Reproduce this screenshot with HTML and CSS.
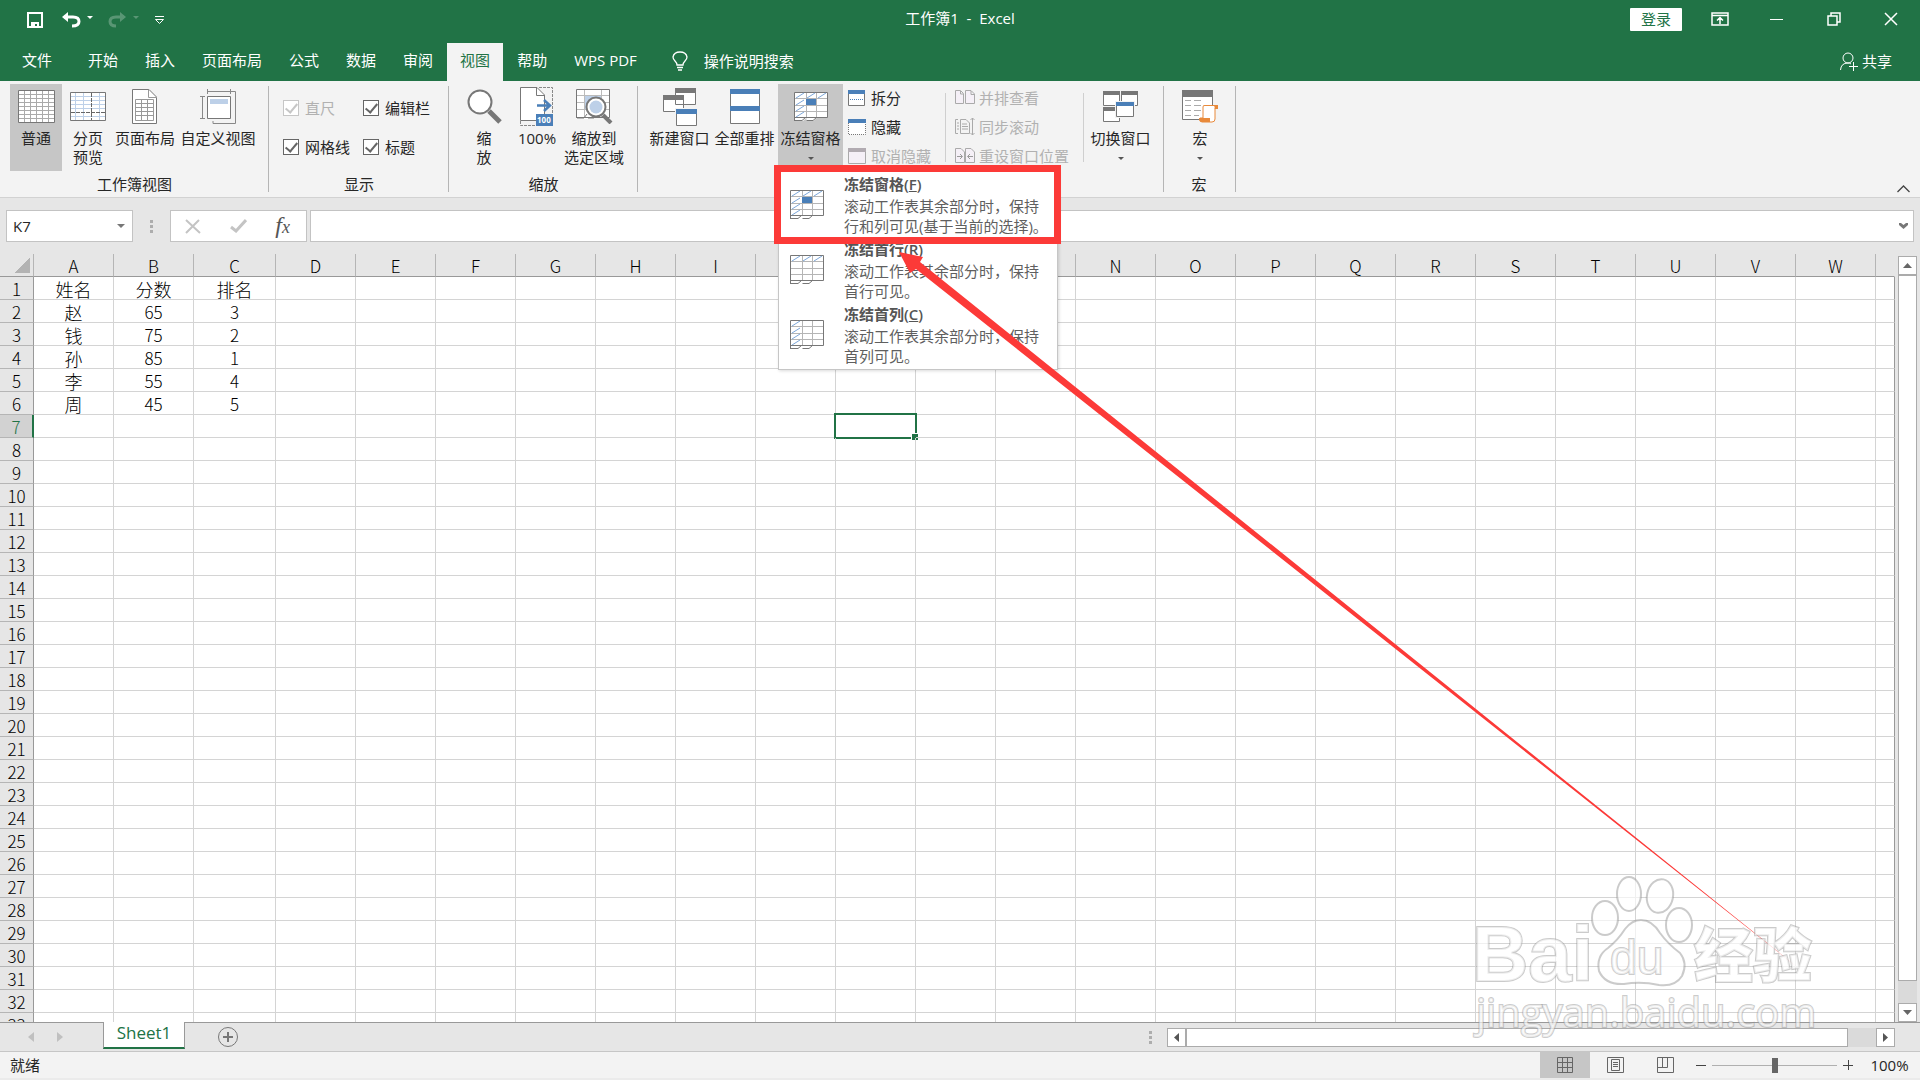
FILE: index.html
```html
<!DOCTYPE html>
<html lang="zh-CN">
<head>
<meta charset="utf-8">
<meta name="viewport" content="width=device-width, initial-scale=1">
<title>工作簿1 - Excel</title>
<link rel="stylesheet" href="styles.css">
</head>
<body>
<svg class="defs" aria-hidden="true">
  <symbol id="freeze-base" viewBox="0 0 34 30">
    <path d="M.5.5H33.500V25.500H23L19.500 29H12.500V25.500L9 29H.5Z" fill="#fff"/>
    <path d="M12.500 1V26M22.500 1V25M1 6.500H33M1 13.500H33M1 19.500H33" stroke="#b5b5b5" fill="none"/>
    <path d="M.5 29V.5H33.500V25.500H1M1 28.500H8L11.500 25.500M12.500 28.500H19L22.500 25.500" stroke="#777" fill="none"/>
  </symbol>
  <symbol id="freeze-panes" viewBox="0 0 34 30">
    <use href="#freeze-base" width="34" height="30"/>
    <path d="M2 6L10 1M13 6L21 1M24 6L32 1M2 13L10 8M2 19L10 14M2 25L10 20" stroke="#7da7d9" fill="none"/>
    <path d="M12 7H22V13H12Z" fill="#4a7fb8"/>
  </symbol>
  <symbol id="freeze-row" viewBox="0 0 34 30">
    <use href="#freeze-base" width="34" height="30"/>
    <path d="M2 6L10 1M13 6L21 1M24 6L32 1" stroke="#7da7d9" fill="none"/>
  </symbol>
  <symbol id="freeze-col" viewBox="0 0 34 30">
    <use href="#freeze-base" width="34" height="30"/>
    <path d="M2 6L10 1M2 13L10 8M2 19L10 14M2 25L10 20" stroke="#7da7d9" fill="none"/>
  </symbol>
</svg>

<div class="app">
  <header class="titlebar">
    <div class="quick">
      <button aria-label="保存"><svg width="16" height="16"><path d="M1 1H15V15H1Z" fill="none" stroke="#fff" stroke-width="2"/><path d="M4 10H12V16H10V12H8V16H4Z" fill="#fff"/></svg></button>
      <button class="undo" aria-label="撤销"><svg width="32" height="16"><path d="M2 5H11Q17 5 17 9.500T10 14" fill="none" stroke="#fff" stroke-width="3"/><path d="M0 5L6 0V10Z" fill="#fff"/><path d="M25 4H31L28 7Z" fill="#fff"/></svg></button>
      <button class="redo" aria-label="恢复"><svg width="32" height="16" opacity=".25"><path d="M16 5H8Q2 5 2 9.500T8 14" fill="none" stroke="#fff" stroke-width="3"/><path d="M18 5L12 0V10Z" fill="#fff"/><path d="M25 4H31L28 7Z" fill="#fff"/></svg></button>
      <button class="more" aria-label="自定义快速访问工具栏"><svg width="11" height="8"><path d="M1 .5H10M1.500 3.500H9.500L5.500 7.500Z" fill="none" stroke="#fff"/></svg></button>
    </div>
    <h1 class="title">工作簿1&nbsp; -&nbsp; Excel</h1>
    <div class="window-tools">
      <button class="login">登录</button>
      <button class="win" aria-label="功能区显示选项"><svg width="18" height="14"><path d="M1 1H17V13H1ZM1 3.500H17M9 12V6M6 8.500L9 5.500L12 8.500" fill="none" stroke="#fff" stroke-width="1.500"/></svg></button>
      <button class="win" aria-label="最小化"><svg width="14" height="14"><path d="M0 7.500H13" stroke="#fff"/></svg></button>
      <button class="win" aria-label="还原"><svg width="14" height="14"><path d="M1 4H10V13H1ZM4 4V1H13V10H10" fill="none" stroke="#fff" stroke-width="1.500"/></svg></button>
      <button class="win" aria-label="关闭"><svg width="14" height="14"><path d="M1 1L13 13M13 1L1 13" stroke="#fff" stroke-width="1.500"/></svg></button>
    </div>
  </header>

  <nav class="tabs">
    <button class="file">文件</button>
    <button>开始</button>
    <button>插入</button>
    <button>页面布局</button>
    <button>公式</button>
    <button>数据</button>
    <button>审阅</button>
    <button class="active">视图</button>
    <button>帮助</button>
    <button>WPS PDF</button>
    <button class="tell"><svg width="16" height="20"><path d="M5 14Q5 12 3 10Q1 8 1 6Q2 1 8 1T15 6Q15 8 13 10Q11 12 11 14ZM5 16.500H11M6 19H10" fill="none" stroke="#fff" stroke-width="1.300"/></svg>操作说明搜索</button>
    <button class="share"><svg width="18" height="19"><circle cx="8" cy="6" r="5" fill="none" stroke="#fff"/><path d="M.5 18Q1 11 8 11Q10 11 11 12M13.500 10V19M9 14.500H18" fill="none" stroke="#fff"/></svg>共享</button>
  </nav>

  <section class="ribbon" aria-label="视图">
    <div class="group views">
      <div class="tools">
        <button class="big on"><svg width="37" height="33"><path d="M.5.5H36.500V32.500H.5Z" fill="#fff" stroke="#777"/><path d="M6.500 1V32M12.500 1V32M18.500 1V32M24.500 1V32M30.500 1V32M1 4.500H36M1 8.500H36M1 12.500H36M1 16.500H36M1 20.500H36M1 24.500H36M1 28.500H36" stroke="#aaa"/></svg><span>普通</span></button>
        <button class="big"><svg width="36" height="29"><path d="M.5.5H35.500V28.500H.5Z" fill="#fff" stroke="#777"/><path d="M5.500 1V28M13.500 1V28M29.500 1V28M1 4.500H35M1 8.500H35M1 12.500H35M1 16.500H35M1 24.500H35" stroke="#bdd0e8"/><path d="M21.500 1V28M1 20.500H35" stroke="#666" stroke-dasharray="4 1"/></svg><span>分页<br>预览</span></button>
        <button class="big"><svg width="26" height="35"><path d="M.5.5H17L24.500 8V34.500H.5Z" fill="#fff" stroke="#777"/><path d="M16.500.5V8.500H25M3.500 10.500H21.500V31.500H3.500ZM9.500 10V31M15.500 10V31M4 14.500H21M4 18.500H21M4 22.500H21M4 26.500H21" fill="none" stroke="#999"/></svg><span>页面布局</span></button>
        <button class="big"><svg width="36" height="35"><path d="M13 32V34.500H35.500V2.500H31M7.500 0V5M30.500 0V5M7.500 2.500H30.500M0 7.500H5M0 29.500H5M2.500 7.500V29.500" fill="none" stroke="#888"/><path d="M7.500 7.500H30.500V29.500H7.500Z" fill="#fff" stroke="#777"/><path d="M10 10H28V15H10Z" fill="#bdd0e8"/></svg><span>自定义视图</span></button>
      </div>
      <h2>工作簿视图</h2>
    </div>
    <div class="group show">
      <div class="tools checks">
        <label class="off"><input type="checkbox" checked disabled>直尺</label>
        <label><input type="checkbox" checked>编辑栏</label>
        <label><input type="checkbox" checked>网格线</label>
        <label><input type="checkbox" checked>标题</label>
      </div>
      <h2>显示</h2>
    </div>
    <div class="group zoom">
      <div class="tools">
        <button class="big"><svg width="35" height="35"><path d="M22 22L33 33" stroke="#777" stroke-width="5"/><circle cx="13" cy="13" r="11.500" fill="#fff" stroke="#777" stroke-width="2"/></svg><span>缩<br>放</span></button>
        <button class="big"><svg width="34" height="39"><path d="M.5.5H17L24.500 8V33.500H.5Z" fill="#fff" stroke="#777"/><path d="M16.500.5V8.500H24" fill="none" stroke="#777"/><path d="M19 .5H32.500V27M.5 34V38.500H16" fill="none" stroke="#888" stroke-dasharray="3 1"/><path d="M17 18.500H29M24 13L30 18.500L24 24" fill="none" stroke="#4a7fb8" stroke-width="2.500"/><path d="M16 27H33V39H16Z" fill="#4a7fb8"/><text x="17" y="36" font-size="8" font-weight="bold" fill="#fff">100</text></svg><span>100%</span></button>
        <button class="big"><svg width="37" height="35"><path d="M.5.5H33.500V28.500H18V30H.5Z" fill="#fff"/><path d="M8.500 1V28M25.500 1V28M1 6.500H33M1 13.500H33M1 20.500H33" stroke="#bbb"/><path d="M9 7H25V20H9Z" fill="#bdd0e8"/><path d="M.5 29V.5H33.500V28.500H1M1 29H8L11 25M12 29H18L21 26" fill="none" stroke="#777"/><path d="M27 26L35 34" stroke="#777" stroke-width="4"/><circle cx="20" cy="18" r="9.500" fill="#fff" stroke="#777" stroke-width="2"/><circle cx="20" cy="18" r="6.500" fill="#bdd0e8"/></svg><span>缩放到<br>选定区域</span></button>
      </div>
      <h2>缩放</h2>
    </div>
    <div class="group window" aria-label="窗口">
      <div class="tools">
        <button class="big"><svg width="34" height="38"><path d="M12.500.5H32.500V16.500H12.500ZM.5 7.500H20.500V23.500H.5Z" fill="#fff" stroke="#777"/><path d="M12 0H33V5H12ZM0 7H21V12H0Z" fill="#777"/><path d="M12 20H34V38H12Z" fill="#f3f3f3"/><path d="M13.500 21.500H33.500V37.500H13.500Z" fill="#fff" stroke="#777"/><path d="M13 21H34V26H13Z" fill="#4a7fb8"/></svg><span>新建窗口</span></button>
        <button class="big"><svg width="30" height="35"><path d="M.5.5H29.500V34.500H.5Z" fill="#fff" stroke="#777"/><path d="M0 0H30V5H0ZM0 17H30V22H0Z" fill="#4a7fb8"/></svg><span>全部重排</span></button>
        <div class="freeze">
          <button class="big on" aria-expanded="true"><svg width="34" height="30"><use href="#freeze-panes"/></svg><span>冻结窗格</span><i class="caret"></i></button>
          <div class="menu">
            <button><svg width="34" height="30"><use href="#freeze-panes"/></svg><span><b>冻结窗格(<u>F</u>)</b>滚动工作表其余部分时，保持<br>行和列可见(基于当前的选择)。</span></button>
            <button><svg width="34" height="30"><use href="#freeze-row"/></svg><span><b>冻结首行(<u>R</u>)</b>滚动工作表其余部分时，保持<br>首行可见。</span></button>
            <button><svg width="34" height="30"><use href="#freeze-col"/></svg><span><b>冻结首列(<u>C</u>)</b>滚动工作表其余部分时，保持<br>首列可见。</span></button>
          </div>
        </div>
        <div class="small">
          <button><svg width="18" height="16"><path d="M.5.5H16.500V15.500H.5Z" fill="#fff" stroke="#777"/><path d="M0 0H17V4H0Z" fill="#4a7fb8"/><path d="M2 9.500H15" stroke="#4a7fb8" stroke-dasharray="1 1"/></svg>拆分</button>
          <button><svg width="18" height="16"><path d="M.5 4V15.500H17.500V4" fill="#fff" stroke="#777" stroke-dasharray="1 1"/><path d="M0 0H18V4H0Z" fill="#4a7fb8"/></svg>隐藏</button>
          <button disabled><svg width="18" height="16"><path d="M.5.5H17.500V15.500H.5Z" fill="#f5f0f7" stroke="#aaa"/><path d="M0 0H18V4H0Z" fill="#b1abb1"/></svg>取消隐藏</button>
        </div>
        <div class="small wide">
          <button disabled><svg width="20" height="15"><path d="M.5 .5H5.500L8.500 3.500V13.500H.5ZM10.500 .5H16L19.500 4V13.500H10.500ZM5.500 1V4H8M16 1V4.500H19" fill="#f5f0f7" stroke="#aaa"/></svg>并排查看</button>
          <button disabled><svg width="20" height="19"><path d="M3 16.500H.5V2.500H3M5.500 2.500H11L14.500 6V16.500H5.500ZM7 7H12M7 9.500H13M7 12H13M2 6H4M2 9H4M2 12H4M17.500 1V18M15.500 3L17.500 1L19.500 3M15.500 16L17.500 18L19.500 16" fill="none" stroke="#aaa"/></svg>同步滚动</button>
          <button disabled><svg width="20" height="16"><path d="M.5 .5H6L9.500 4V14.500H.5ZM10.500 .5H16L19.500 4V14.500H10.500Z" fill="#f5f0f7" stroke="#aaa"/><path d="M2 8.500H7M5 6L7.500 8.500L5 11M18 8.500H13M15 6L12.500 8.500L15 11" fill="none" stroke="#999"/></svg>重设窗口位置</button>
        </div>
        <button class="big"><svg width="35" height="31"><path d="M.5.5H16.500V14.500H.5ZM18.500.5H34.500V14.500H18.500ZM.5 16.500H16.500V30.500H.5Z" fill="#fff" stroke="#777"/><path d="M0 0H17V4H0ZM18 0H35V4H18ZM0 16H17V20H0Z" fill="#777"/><path d="M12 10H32V27H12Z" fill="#f3f3f3"/><path d="M13.500 11.500H30.500V25.500H13.500Z" fill="#fff" stroke="#777"/><path d="M13 11H31V15H13Z" fill="#4a7fb8"/></svg><span>切换窗口</span><i class="caret"></i></button>
      </div>
    </div>
    <div class="group macro">
      <div class="tools">
        <button class="big"><svg width="36" height="33"><path d="M.5.5H30.500V29.500H.5Z" fill="#fff" stroke="#777"/><path d="M0 0H31V7H0Z" fill="#777"/><path d="M3 10.500H9M12 10.500H19M3 15.500H9M12 15.500H19M3 20.500H9M12 20.500H19M3 25.500H9M12 25.500H17" stroke="#aaa"/><path d="M21 28V17Q21 15 23 15.500H35V18H33V29Q33 32 30 32H20Q17 32 18 28Z" fill="#fff" stroke="#e8893a"/><path d="M17 28H28V32H19Q17 31 17 28ZM32 15H36V19H33Z" fill="#e8893a"/></svg><span>宏</span><i class="caret"></i></button>
      </div>
      <h2>宏</h2>
    </div>
    <button class="collapse" aria-label="折叠功能区"><svg width="13" height="8"><path d="M.5 7L6.500 1L12.500 7" fill="none" stroke="#444" stroke-width="1.300"/></svg></button>
  </section>

  <section class="formula">
    <div class="namebox"><input type="text" value="K7" aria-label="名称框"><i class="caret"></i></div>
    <i class="dots"></i>
    <div class="fx">
      <button aria-label="取消"><svg width="16" height="15"><path d="M1 1L15 14M14 1L1 14" stroke="#c4c4c4" stroke-width="2"/></svg></button>
      <button aria-label="输入"><svg width="17" height="14"><path d="M1 8L6 12L16 1" fill="none" stroke="#c4c4c4" stroke-width="3"/></svg></button>
      <button class="fn" aria-label="插入函数"><i>f<small>x</small></i></button>
    </div>
    <div class="bar"><input type="text" aria-label="编辑栏"><svg width="9" height="7"><path d="M0 0H2L4.500 2L7 0H9V2L4.500 6L0 2Z" fill="#777"/></svg></div>
  </section>

  <main class="sheet">
    <div class="grid"><table id="cells"></table></div>
    <div class="vscroll">
      <button aria-label="向上"><svg width="9" height="5"><path d="M0 5L4.500 0L9 5Z" fill="#666"/></svg></button>
      <div class="track"><div class="thumb"></div></div>
      <button aria-label="向下"><svg width="9" height="5"><path d="M0 0L4.500 5L9 0Z" fill="#666"/></svg></button>
    </div>
  </main>

  <div class="sheetbar">
    <button class="nav" aria-label="上一张"><svg width="6" height="10"><path d="M6 0V10L0 5Z" fill="#c0c0c0"/></svg></button>
    <button class="nav" aria-label="下一张"><svg width="6" height="10"><path d="M0 0V10L6 5Z" fill="#c0c0c0"/></svg></button>
    <button class="sheettab">Sheet1</button>
    <button class="add" aria-label="新工作表"><svg width="20" height="20"><circle cx="10" cy="10" r="9.500" fill="none" stroke="#777"/><path d="M5 10H15M10 5V15" stroke="#777" stroke-width="2"/></svg></button>
    <i class="dots"></i>
    <div class="hscroll">
      <button aria-label="向左"><svg width="5" height="9"><path d="M5 0V9L0 4.500Z" fill="#555"/></svg></button>
      <div class="track"><div class="thumb"></div></div>
      <button aria-label="向右"><svg width="5" height="9"><path d="M0 0V9L5 4.500Z" fill="#555"/></svg></button>
    </div>
  </div>

  <footer class="status">
    <span class="ready">就绪</span>
    <button class="view on" aria-label="普通"><svg width="16" height="16"><path d="M.5.5H15.500V15.500H.5ZM5.500 0V16M10.500 0V16M0 5.500H16M0 10.500H16" fill="none" stroke="#666"/></svg></button>
    <button class="view" aria-label="页面布局"><svg width="17" height="16"><path d="M.5.5H16.500V15.500H.5ZM4.500 2.500H12.500V13.500H4.500ZM6 5.500H11M6 7.500H11M6 9.500H11" fill="none" stroke="#666"/></svg></button>
    <button class="view" aria-label="分页预览"><svg width="17" height="16"><path d="M.5.5H16.500V15.500H.5ZM.5 10.500H10.500V.5M5.500 .5V10.500" fill="none" stroke="#666"/></svg></button>
    <button class="step" aria-label="缩小"><svg width="10" height="10"><path d="M0 5.500H10" stroke="#444"/></svg></button>
    <input type="range" min="10" max="190" value="100" aria-label="显示比例">
    <button class="step" aria-label="放大"><svg width="10" height="10"><path d="M0 5.500H10M5.500 0V10" stroke="#444"/></svg></button>
    <span class="percent">100%</span>
  </footer>

  <svg class="overlay" aria-hidden="true">
    <path d="M777.500 168.500H1057.500V240.500H777.500Z" fill="none" stroke="#fc3a38" stroke-width="7"/>
    <path d="M899 252L923 257L920 262L1797 967L916 269L910 273Z" fill="#fc3a38"/>
    <g class="mark">
      <text x="1472" y="981" class="bai">Bai</text>
      <ellipse cx="1605" cy="918" rx="13" ry="17"/>
      <ellipse cx="1629" cy="894" rx="12" ry="17"/>
      <ellipse cx="1660" cy="896" rx="13" ry="17" transform="rotate(12 1660 896)"/>
      <ellipse cx="1679" cy="925" rx="13" ry="17"/>
      <path d="M1641 920Q1652 920 1660 933Q1668 944 1680 953Q1688 963 1682 976Q1675 987 1659 985Q1641 981 1624 984Q1605 985 1599 971Q1596 956 1608 948Q1618 940 1625 929Q1632 920 1641 920Z"/>
      <text x="1610" y="974" class="du">du</text>
      <text x="1694" y="977" class="jy">经验</text>
      <text x="1476" y="1027" class="site">jingyan.baidu.com</text>
    </g>
  </svg>
</div>
<script src="sheet.js"></script>
</body>
</html>
```
FILE: styles.css
```css
* { box-sizing: border-box; }
body {
  margin: 0;
  font: 15px/20px "Open Sans", "Noto Sans CJK SC", sans-serif;
  color: #262626;
  background: #e6e6e6;
}
button, input { font: inherit; color: inherit; margin: 0; }
button { border: 0; padding: 0; background: none; white-space: nowrap; }
svg { display: block; flex: none; }
.defs { position: absolute; width: 0; height: 0; }
h1, h2 { margin: 0; font-size: 15px; font-weight: 400; }
.app { position: relative; display: flex; flex-direction: column; height: 100vh; overflow: hidden; }
.caret { width: 0; height: 0; border: 3px solid transparent; border-top-color: #555; border-bottom: 0; }

.titlebar {
  display: grid; grid-template-columns: 1fr auto 1fr; align-items: start;
  height: 43px; flex: none; background: #217346; color: #fff;
}
.quick { display: flex; align-items: center; gap: 14px; height: 40px; padding-left: 27px; }
.quick .undo { margin-left: 5px; }
.title { line-height: 36px; }
.window-tools { display: flex; justify-content: flex-end; align-items: center; height: 38px; padding-right: 1px; }
.login { width: 52px; height: 23px; margin-right: 9px; background: #fff; color: #217346; line-height: 22px; border-radius: 1px; }
.win { width: 57px; height: 38px; display: grid; place-items: center; }

.tabs { display: flex; gap: 1px; height: 38px; flex: none; background: #217346; color: #fff; padding-left: 9px; }
.tabs button { padding: 0 13px 4px; line-height: 34px; }
.tabs .file { margin-right: 9px; }
.tabs .active { background: #f3f3f3; color: #217346; }
.tabs .tell, .tabs .share { display: flex; align-items: center; gap: 16px; padding-bottom: 2px; }
.tabs .tell { margin-left: 8px; }
.tabs .share { gap: 4px; margin-left: auto; padding-right: 28px; }

.ribbon { display: flex; height: 117px; flex: none; background: #f3f3f3; border-bottom: 1px solid #d2d2d2; position: relative; z-index: 2; }
.group { display: flex; flex-direction: column; position: relative; }
.group::after { content: ""; position: absolute; right: 0; top: 5px; bottom: 5px; width: 1px; background: #b5b5b5; }
.group h2 { text-align: center; line-height: 26px; }
.tools { display: flex; padding-top: 3px; height: 90px; flex: none; }
.views { width: 269px; }
.views .tools { display: grid; grid-template-columns: 52px 52px 62px 84px; padding-left: 10px; }
.show { width: 180px; }
.show .checks { display: grid; grid-template-columns: 80px 80px; grid-template-rows: 39px 39px; padding: 7px 0 0 14px; }
.checks label { display: flex; align-items: center; gap: 6px; white-space: nowrap; }
.checks .off { color: #b1b1b1; }
.checks input { appearance: none; width: 16px; height: 16px; flex: none; border: 1px solid #666; background: #fff; display: grid; place-items: center; }
.checks input::before { content: ""; width: 5px; height: 10px; border: solid #666; border-width: 0 2px 2px 0; transform: rotate(40deg); margin-bottom: 3px; }
.checks .off input, .checks .off input::before { border-color: #c6c6c6; }
.zoom { width: 189px; }
.zoom .tools { display: grid; grid-template-columns: 52px 54px 60px; padding-left: 9px; }
.window { width: 526px; }
.window .tools { padding-left: 9px; }
.window .big { width: 65px; }
.macro { width: 72px; }
.macro .big { width: 100%; }
.macro h2 { padding-right: 2px; }
.big { display: grid; grid-template-rows: 45px 19px 21px; justify-items: center; align-items: center; height: 87px; line-height: 19px; }
.big span { grid-row: 2; align-self: start; margin: 0 -9px; }
.big .caret { grid-row: 3; }
.big.on { background: #c6c6c6; }
.freeze { position: relative; width: 65px; margin-left: 1px; }
.small { display: grid; grid-template-rows: 29px 29px 29px; width: 103px; padding-left: 5px; position: relative; }
.small::after { content: ""; position: absolute; right: 0; top: 9px; bottom: 9px; width: 1px; background: #cfcfcf; }
.small button { display: flex; align-items: center; gap: 5px; padding-bottom: 2px; }
.small button:disabled { color: #b1b1b1; }
.small.wide { width: 138px; padding-left: 9px; margin-right: 4px; }
.small.wide button { gap: 4px; }
.menu {
  position: absolute; top: 87px; left: 0; width: 280px;
  background: #fff; border: 1px solid #c6c6c6; box-shadow: 1px 1px 3px rgba(0, 0, 0, .15);
  padding-bottom: 2px;
}
.menu button { display: flex; gap: 20px; width: 100%; height: 65px; padding: 2px 0 0 11px; text-align: left; color: #5f5f5f; }
.menu svg { margin-top: 16px; }
.menu b { display: block; margin-bottom: 2px; font-weight: 600; color: #555; }
.collapse { margin: auto 10px 4px auto; }

.formula { display: flex; height: 56px; flex: none; padding: 12px 6px 12px; background: #e6e6e6; }
.formula > div { display: flex; align-items: center; background: #fff; border: 1px solid #c3c3c3; }
.formula input { border: 0; padding: 0 6px; background: none; min-width: 0; flex: 1; height: 28px; outline: 0; }
.namebox { width: 127px; padding-right: 7px; }
.namebox .caret { border-width: 4px; border-bottom: 0; border-top-color: #777; }
.dots { width: 3px; height: 13px; background: repeating-linear-gradient(#adadad 0 3px, transparent 3px 5px); align-self: center; }
.formula .dots { margin: 0 17px; }
.fx { width: 137px; justify-content: space-between; padding: 0 16px 0 14px; margin-right: 3px; }
.fn { font: 24px/24px "Liberation Serif", serif; color: #555; }
.fn small { font-size: 18px; }
.bar { flex: 1; padding-right: 5px; }

.sheet { display: flex; flex: 1; min-height: 0; border-bottom: 1px solid #999; }
.grid { flex: 1; overflow: hidden; background: linear-gradient(#e6e6e6 23px, #fff 23px); }
.grid table { table-layout: fixed; width: 100%; border-spacing: 0; font: 300 18px/20px "Noto Sans CJK SC", sans-serif; color: #000; }
.rowhead { width: 34px; }
.col { width: 80px; }
.col-wide { width: 82px; }
.grid th, .grid td { height: 23px; padding: 2px 0 0; text-align: center; font-weight: inherit; border: solid #d4d4d4; border-width: 0 1px 1px 0; white-space: nowrap; }
.grid td { position: relative; }
.grid td.num, .grid th { font-size: 17px; }
.grid th { background: #e6e6e6; border-color: #999; }
.grid thead th { border-right-color: #b5b5b5; }
.grid tbody th { border-bottom-color: #b5b5b5; }
.grid thead th:last-child { border-right-color: #e6e6e6; }
.grid td:last-child { border-right-color: #999; }
.grid thead th:first-child { background: linear-gradient(135deg, transparent 50%, #b3b3b3 50%) no-repeat 15px 4px / 15px 15px #e6e6e6; }
.grid tr.current th { background: #d2d2d2; color: #217346; border-right: 2px solid #217346; }
.grid td.selected::before { content: ""; position: absolute; inset: -2px; border: 2px solid #217346; }
.grid td.selected::after { content: ""; position: absolute; right: -3px; bottom: -3px; width: 6px; height: 6px; background: #217346; border: solid #fff; border-width: 1px 0 0 1px; }

.vscroll { display: flex; flex-direction: column; width: 25px; padding: 2px 3px 0; }
.vscroll button { height: 19px; }
.vscroll button, .hscroll button { display: grid; place-items: center; background: #fff; border: 1px solid #ababab; flex: none; }
.track { flex: 1; background: #dadada; }
.thumb { background: #fff; border: 1px solid #ababab; }
.vscroll .thumb { height: 97%; }

.sheetbar { display: flex; align-items: center; height: 29px; flex: none; padding: 0 25px 0 28px; border-bottom: 1px solid #c6c6c6; }
.nav { margin-right: 23px; }
.sheettab { align-self: start; margin: -1px 33px 0 17px; width: 82px; height: 27px; position: relative; background: #fff; border: solid #999; border-width: 0 1px; border-bottom: 2px solid #217346; color: #217346; font-size: 17px; line-height: 20px; padding-bottom: 4px; }
.sheetbar .dots { margin-left: auto; margin-right: 15px; }
.hscroll { display: flex; width: 39%; height: 19px; }
.hscroll button { width: 19px; }
.hscroll .thumb { height: 100%; width: 96%; }

.status { display: flex; align-items: center; height: 28px; flex: none; background: #f3f3f3; border-bottom: 2px solid #ebebeb; }
.ready { margin-right: auto; padding-left: 10px; line-height: 24px; }
.view { width: 50px; height: 26px; display: grid; place-items: center; }
.view.on { background: #c6c6c6; }
.step { margin: 0 6px; }
.status input { appearance: none; width: 125px; height: 15px; margin: 0; background: linear-gradient(#b0b0b0, #b0b0b0) no-repeat center / 100% 1px; }
.status input::-webkit-slider-thumb { appearance: none; width: 6px; height: 15px; background: #666; }
.percent { width: 61px; text-align: center; }

.overlay { position: absolute; left: 0; top: 0; width: 100%; height: 100%; z-index: 3; pointer-events: none; }
.mark { fill: rgba(255, 255, 255, .65); stroke: rgba(140, 140, 140, .45); stroke-width: 2px; }
.mark text { paint-order: stroke; }
.bai { font: bold 78px "Liberation Sans", sans-serif; }
.du { font: 48px "Liberation Sans", sans-serif; }
.jy { font: 900 59px "Noto Sans CJK SC", sans-serif; }
.site { font: 40px "Open Sans", sans-serif; }
```
FILE: sheet.js
```js
const columns = "ABCDEFGHIJKLMNOPQRSTUVW".split("");
const data = [
  ["姓名", "分数", "排名"],
  ["赵", 65, 3],
  ["钱", 75, 2],
  ["孙", 85, 1],
  ["李", 55, 4],
  ["周", 45, 5],
];
const rowCount = 33;
const selected = { row: 7, column: "K" };

let html = '<colgroup><col class="rowhead">';
html += columns.map(c => `<col class="${c === "C" ? "col-wide" : "col"}">`).join("");
html += "<col></colgroup><thead><tr><th></th>";
html += columns.map(c => `<th scope="col">${c}</th>`).join("") + "<th></th></tr></thead><tbody>";
for (let r = 1; r <= rowCount; r++) {
  html += `<tr${r === selected.row ? ' class="current"' : ""}><th scope="row">${r}</th>`;
  columns.forEach((c, i) => {
    const value = data[r - 1]?.[i] ?? "";
    const cls = r === selected.row && c === selected.column ? "selected" : typeof value === "number" ? "num" : "";
    html += `<td${cls ? ` class="${cls}"` : ""}>${value}</td>`;
  });
  html += "<td></td></tr>";
}
document.getElementById("cells").innerHTML = html + "</tbody>";
```
